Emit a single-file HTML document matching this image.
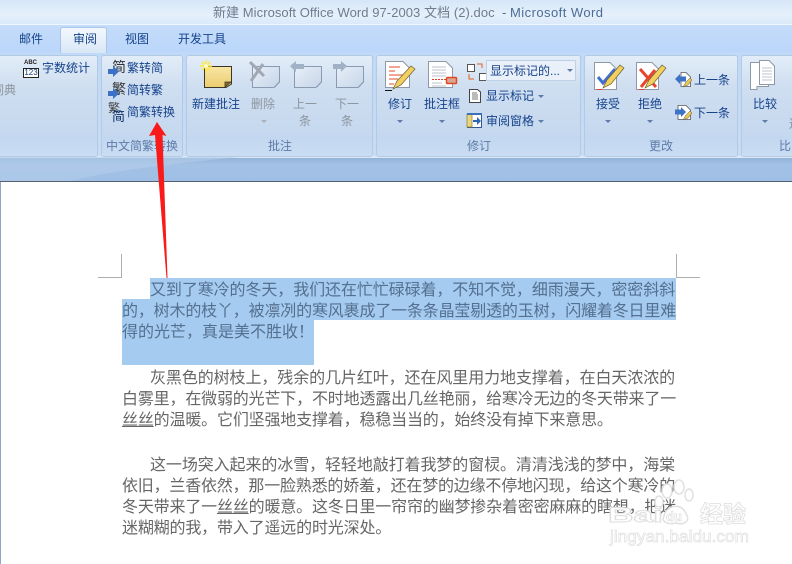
<!DOCTYPE html>
<html lang="zh"><head><meta charset="utf-8"><style>
html,body{margin:0;padding:0}
#r{position:relative;width:792px;height:564px;overflow:hidden;background:#fff;font-family:"Liberation Sans","WenQuanYi Zen Hei","Noto Sans CJK SC",sans-serif}
.a{position:absolute}
.t{position:absolute;white-space:nowrap;font-size:12px;line-height:14px;color:#15428b}
.g{color:#8d959f}
.lab{color:#5d7ba8;text-align:center}
.grp{position:absolute;top:55px;height:100px;border:1px solid #b4cae4;border-radius:3px;background:linear-gradient(#e2edf8 0,#cfdef0 30%,#c5d8ef 81%,#c1d8f0 81%,#c3d9f1 100%);box-sizing:content-box;overflow:hidden}
.grp i{position:absolute;left:0;right:0;top:80px;height:20px;background:linear-gradient(#c2d8f0,#c9dcf2)}
.d{position:absolute;white-space:nowrap;font-family:"WenQuanYi Zen Hei","Noto Sans CJK SC",sans-serif;font-size:16px;line-height:21px;height:21px;color:#666}
.s{color:#54708f}
.c{position:absolute;width:0;height:0;border-left:3px solid transparent;border-right:3px solid transparent;border-top:3px solid #5d7ba8}
u{text-underline-offset:1px}
svg{position:absolute;overflow:visible}
</style></head><body><div id="r">

<div class="a" style="left:0;top:0;width:792px;height:25px;background:linear-gradient(#d6e6f8,#e5f0fb 60%,#d9e8f9)"></div>
<div class="a" style="left:0;top:24px;width:792px;height:1px;background:#eef6fe"></div>
<div class="a" style="left:0;top:25px;width:792px;height:28px;background:linear-gradient(#c5dcfa,#bad6fa)"></div>
<div class="a" style="left:0;top:52px;width:792px;height:105px;background:linear-gradient(#bfd9f8,#c8dcf3)"></div>
<div class="a" style="left:0;top:157px;width:792px;height:24px;background:linear-gradient(#8fb0d6 0,#a3c1e5 30%,#a0bfe6 100%)"></div>
<div class="a" style="left:0;top:156px;width:792px;height:2px;background:#dbe8f6"></div>
<svg style="left:0;top:157px" width="792" height="24"><path d="M70 24C110 14 160 8 240 0H0V24Z" fill="#b4cdea" opacity=".6"/></svg>
<div class="a" style="left:0;top:181px;width:792px;height:1px;background:#55606f"></div>
<div class="a" style="left:0;top:182px;width:1px;height:382px;background:#8ea6c4"></div>

<div class="t" style="left:213px;top:6px;color:#6f7c8d;font-size:13px;letter-spacing:.06px">新建 Microsoft Office Word 97-2003 文档 (2).doc</div>
<div class="t" style="left:502px;top:6px;color:#4b6c97;font-size:13px">-</div>
<div class="t" style="left:510px;top:6px;color:#4b6c97;font-size:13px;letter-spacing:.45px">Microsoft Word</div>

<div class="t" style="left:19px;top:32px;color:#15428b">邮件</div>
<div class="a" style="left:60px;top:27px;width:47px;height:26px;box-sizing:border-box;border:1px solid #a7c6e9;border-bottom:0;border-radius:3px 3px 0 0;background:linear-gradient(#f3f8fd,#d9e7f6)"></div>
<div class="t" style="left:73px;top:32px;color:#15428b">审阅</div>
<div class="t" style="left:125px;top:32px">视图</div>
<div class="t" style="left:178px;top:32px">开发工具</div>

<div class="grp" style="left:-6px;width:102px"><i></i></div>
<div class="grp" style="left:101px;width:80px"><i></i></div>
<div class="grp" style="left:186px;width:185px"><i></i></div>
<div class="grp" style="left:376px;width:203px"><i></i></div>
<div class="grp" style="left:584px;width:152px"><i></i></div>
<div class="grp" style="left:741px;width:70px"><i></i></div>

<div class="t" style="left:42px;top:61px">字数统计</div>
<div class="t g" style="left:-8px;top:83px">词典</div>
<div class="a" style="left:23px;top:68px;width:14px;height:8px;border:1px solid #222;background:#fff;font:8px/8px 'Liberation Sans';color:#123a77;text-align:center">123</div>
<div class="a" style="left:24px;top:60px;font:bold 6px/7px 'Liberation Sans';color:#222">ABC</div>

<!-- 中文简繁转换 -->
<div class="t" style="left:127px;top:61px">繁转简</div>
<div class="t" style="left:127px;top:83px">简转繁</div>
<div class="t" style="left:127px;top:105px">简繁转换</div>
<div class="t" style="left:112px;top:60px;font-size:14px;color:#333">简</div>
<div class="t" style="left:112px;top:82px;font-size:14px;color:#333">繁</div>
<div class="t" style="left:108px;top:101px;font-size:12px;color:#444">繁</div>
<div class="t" style="left:112px;top:110px;font-size:13px;color:#0f2f68">简</div>
<svg style="left:108px;top:66px" width="12" height="34"><path d="M0 3H5V0L11 5.500 5 11V8H0Z" fill="#3d71c8"/><path d="M0 25H5V22L11 27.500 5 33V30H0Z" fill="#3d71c8"/></svg>
<div class="t lab" style="left:106px;top:139px">中文简繁转换</div>

<!-- 批注 -->
<svg style="left:198px;top:58px" width="170" height="34">
<defs><linearGradient id="y" x1="0" y1="0" x2="0" y2="1"><stop offset="0" stop-color="#f8e6a4"/><stop offset="1" stop-color="#eccd70"/></linearGradient>
<linearGradient id="n" x1="0" y1="0" x2="1" y2="1"><stop offset="0" stop-color="#e8eff8"/><stop offset="1" stop-color="#c6d5e8"/></linearGradient></defs>
<path d="M6.500 8.500H33.500V26L28 29.500H6.500Z" fill="url(#y)" stroke="#3b3527"/>
<path d="M27 29V24H33L27 29Z" fill="#8c6d22" stroke="#3b3527" stroke-width=".8"/>
<path d="M8 2V14M2 8H14M4 4L12 12M12 4L4 12" stroke="#ffe93a" stroke-width="1.500"/>
<circle cx="8" cy="8" r="2" fill="#fffbd0"/>
<g fill="url(#n)" stroke="#8a9ab2"><path d="M54.500 8.500H81.500V24L76 29.500H54.500Z"/><path d="M96.500 8.500H123.500V24L118 29.500H96.500Z"/><path d="M138.500 8.500H165.500V24L160 29.500H138.500Z"/></g>
<path d="M52 4L66 18M65 6L53 23" stroke="#a0a8b4" stroke-width="3"/>
<path d="M92 8L98 3V6H106V11H98V14Z" fill="#a2b2c6"/><path d="M149 8L143 3V6H135V11H143V14Z" fill="#a2b2c6"/>
<path d="M77 29L81 24M119 29L123 24M161 29L165 24" stroke="#8a9ab2"/>
</svg>
<div class="t" style="left:192px;top:97px">新建批注</div>
<div class="t g" style="left:251px;top:97px">删除</div>
<div class="c" style="left:261px;top:120px;border-top-color:#a5aeba"></div>
<div class="t g" style="left:293px;top:97px">上一</div>
<div class="t g" style="left:299px;top:114px">条</div>
<div class="t g" style="left:335px;top:97px">下一</div>
<div class="t g" style="left:341px;top:114px">条</div>
<div class="t lab" style="left:268px;top:139px">批注</div>

<!-- 修订 -->
<svg style="left:384px;top:59px" width="200" height="70">
<path d="M1.500 2.500H19L25.500 9V28.500H1.500Z" fill="#fff" stroke="#8e98a6"/>
<path d="M5 8H16M5 12H11M5 16H20M5 20H14M5 25H10" stroke="#e0492a"/>
<path d="M9 30L13 22 27 7 31 10 17 26Z" fill="#f2cf5e" stroke="#6b6236" stroke-width=".7"/>
<path d="M1 31.500H8" stroke="#111"/>
<path d="M44.500 2.500H62L68.500 9V28.500H44.500Z" fill="#fff" stroke="#8e98a6"/>
<path d="M48 8H62M48 11H62M48 14H62M48 17H62M48 24H58M48 27H62" stroke="#bcc4cf"/>
<path d="M48 20.500H62" stroke="#d8442a" stroke-dasharray="2 1"/>
<rect x="62.500" y="18.500" width="10" height="6" rx="1" fill="#d9a494" stroke="#dc4a22" stroke-width="1.500"/>
<g fill="#fff" stroke="#555"><rect x="83.500" y="5.500" width="7" height="7"/><rect x="95.500" y="14.500" width="7" height="7"/></g>
<path d="M93 5H98V9M90 20H85V15" fill="none" stroke="#e0601f"/>
<path d="M85.500 30.500V43.500H96.500V33L93.500 30.500Z" fill="#fff" stroke="#444"/><path d="M88 34H93M88 36H94M88 38H94M88 40H94" stroke="#777"/>
<rect x="83.500" y="54.500" width="14" height="14" fill="#fff" stroke="#31598f"/>
<rect x="83" y="55" width="5" height="13" fill="#e7d57e" stroke="#8c7b31" stroke-width=".7"/><path d="M83 55H98" stroke="#3c70bd" stroke-width="2"/><path d="M89 61H93V58L97 62 93 66V63H89Z" fill="#2e66b5"/>
</svg>
<div class="t" style="left:388px;top:97px">修订</div>
<div class="c" style="left:397px;top:120px"></div>
<div class="t" style="left:424px;top:97px">批注框</div>
<div class="c" style="left:439px;top:120px"></div>
<div class="a" style="left:486px;top:60px;width:90px;height:21px;box-sizing:border-box;border:1px solid #bcd0e6;background:#e9f0fa"></div>
<div class="t" style="left:490px;top:64px">显示标记的...</div>
<div class="c" style="left:567px;top:69px"></div>
<div class="t" style="left:486px;top:89px">显示标记</div>
<div class="c" style="left:538px;top:95px"></div>
<div class="t" style="left:486px;top:114px">审阅窗格</div>
<div class="c" style="left:538px;top:120px"></div>
<div class="t lab" style="left:467px;top:139px">修订</div>

<!-- 更改 -->
<svg style="left:594px;top:60px" width="190" height="70">
<g fill="#fff" stroke="#8e98a6"><path d="M.5 2.500H16L22.500 9V29.500H.5Z"/><path d="M42.500 2.500H58L64.500 9V29.500H42.500Z"/></g>
<path d="M4 17L9 23 21 9" fill="none" stroke="#3f6fd0" stroke-width="3"/>
<path d="M46 9L62 27M61 10L47 27" fill="none" stroke="#e8452c" stroke-width="3"/>
<path d="M9 28L13 20 26 5 30 8 17 24Z" fill="#f2cf5e" stroke="#6b6236" stroke-width=".7"/>
<path d="M51 28L55 20 68 5 72 8 59 24Z" fill="#f2cf5e" stroke="#6b6236" stroke-width=".7"/>
<path d="M3 29.500H8M45 29.500H50" stroke="#d8442a"/>
<path d="M87 12.500H92L96.500 17V26.500H87Z" fill="#fff" stroke="#555" stroke-width=".8"/>
<path d="M81 19L86 14V16.500H92V21.500H86V24Z" fill="#3e72c6"/><path d="M89 27L92 22 96 18 98 20 94 25Z" fill="#e9c752" stroke="#555" stroke-width=".5"/>
<path d="M84 45.500H92L96.500 50V59.500H84Z" fill="#fff" stroke="#555" stroke-width=".8"/>
<path d="M92 52L87 47V49.500H81V54.500H87V57Z" fill="#3e72c6"/><path d="M89 60L92 55 96 51 98 53 94 58Z" fill="#e9c752" stroke="#555" stroke-width=".5"/>
<path d="M162.500 2.500H173L178.500 8V26.500H167V29.500H160.500V2.500Z" fill="#fff" stroke="#8e98a6" transform="translate(-4,0)"/>
<path d="M165.500 .5H175L180.500 6V24.500H165.500Z" fill="#fff" stroke="#8e98a6"/><path d="M168 8H178M168 11H178M168 14H178M168 17H178M168 20H178" stroke="#bcc4cf"/>
</svg>
<div class="t" style="left:694px;top:73px">上一条</div>
<div class="t" style="left:694px;top:106px">下一条</div>
<div class="t" style="left:596px;top:97px">接受</div>
<div class="c" style="left:605px;top:120px"></div>
<div class="t" style="left:638px;top:97px">拒绝</div>
<div class="c" style="left:647px;top:120px"></div>
<div class="t lab" style="left:649px;top:139px">更改</div>
<div class="t" style="left:753px;top:97px">比较</div>
<div class="c" style="left:762px;top:120px"></div>
<div class="t lab" style="left:779px;top:139px">比</div>
<div class="t g" style="left:789px;top:117px">送</div>

<!-- page -->
<div class="a" style="left:98px;top:277px;width:24px;height:1px;background:#aeaeae"></div>
<div class="a" style="left:121px;top:254px;width:1px;height:24px;background:#aeaeae"></div>
<div class="a" style="left:676px;top:277px;width:24px;height:1px;background:#aeaeae"></div>
<div class="a" style="left:676px;top:254px;width:1px;height:24px;background:#aeaeae"></div>

<div class="a" style="left:150px;top:278px;width:526px;height:21px;background:#a6cbf0"></div>
<div class="a" style="left:122px;top:299px;width:554px;height:21px;background:#a6cbf0"></div>
<div class="a" style="left:122px;top:320px;width:192px;height:45px;background:#a6cbf0"></div>

<div class="d s" style="left:150px;top:278px;letter-spacing:-.09px">又到了寒冷的冬天&#65292;我们还在忙忙碌碌着&#65292;不知不觉&#65292;细雨漫天&#65292;密密斜斜</div>
<div class="d s" style="left:122px;top:299px;letter-spacing:-.17px">的&#65292;树木的枝丫&#65292;被凛冽的寒风裹成了一条条晶莹剔透的玉树&#65292;闪耀着冬日里难</div>
<div class="d s" style="left:122px;top:320px">得的光芒&#65292;真是美不胜收&#65281;</div>

<div class="d" style="left:150px;top:366px;letter-spacing:-.09px">灰黑色的树枝上&#65292;残余的几片红叶&#65292;还在风里用力地支撑着&#65292;在白天浓浓的</div>
<div class="d" style="left:122px;top:387px;letter-spacing:-.17px">白雾里&#65292;在微弱的光芒下&#65292;不时地透露出几丝艳丽&#65292;给寒冷无边的冬天带来了一</div>
<div class="d" style="left:122px;top:408px;letter-spacing:-.17px"><u>丝丝</u>的温暖。它们坚强地支撑着&#65292;稳稳当当的&#65292;始终没有掉下来意思。</div>

<div class="d" style="left:150px;top:453px;letter-spacing:-.09px">这一场突入起来的冰雪&#65292;轻轻地敲打着我梦的窗棂。清清浅浅的梦中&#65292;海棠</div>
<div class="d" style="left:122px;top:474px;letter-spacing:-.2px">依旧&#65292;兰香依然&#65292;那一脸熟悉的娇羞&#65292;还在梦的边缘不停地闪现&#65292;给这个寒冷的</div>
<div class="d" style="left:122px;top:495px;letter-spacing:-.17px">冬天带来了一<u>丝丝</u>的暖意。这冬日里一帘帘的幽梦掺杂着密密麻麻的瞎想&#65292;把迷</div>
<div class="d" style="left:122px;top:516px;letter-spacing:-.17px">迷糊糊的我&#65292;带入了遥远的时光深处。</div>

<!-- watermark -->
<svg style="left:606px;top:478px" width="146" height="72">
<g fill="#fff" stroke="#e0e0e0" stroke-width="1.500">
<ellipse cx="61" cy="13" rx="5" ry="7"/><ellipse cx="73" cy="9" rx="5" ry="7"/><ellipse cx="83" cy="17" rx="4" ry="6"/><ellipse cx="53" cy="24" rx="4" ry="6"/>
<path d="M58 38C60 27 76 24 80 36 85 42 78 48 70 45 62 47 55 44 58 38Z"/></g>
<text x="2" y="44" font-family="Liberation Sans" font-weight="bold" font-size="21" fill="#fff" stroke="#dedede" stroke-width=".9" textLength="55" lengthAdjust="spacingAndGlyphs">Bai</text>
<text x="60" y="43" font-family="Liberation Sans" font-weight="bold" font-size="13" fill="#fff" stroke="#dedede" stroke-width=".7">du</text>
<text x="94" y="44" font-family="Noto Sans CJK SC" font-weight="bold" font-size="23" fill="#fff" stroke="#dedede" stroke-width=".8">经验</text>
<text x="4" y="64" font-family="Liberation Sans" font-size="16.500" fill="#fff" stroke="#e0e0e0" stroke-width=".7" textLength="139" lengthAdjust="spacingAndGlyphs">jingyan.baidu.com</text>
</svg>

<!-- red arrow -->
<svg style="left:0;top:0;z-index:5" width="792" height="564"><path d="M157 122L166.500 136 162.500 135 167.500 278H166.500L155 135 149 136Z" fill="#fb1a1a"/></svg>
</div></body></html>
